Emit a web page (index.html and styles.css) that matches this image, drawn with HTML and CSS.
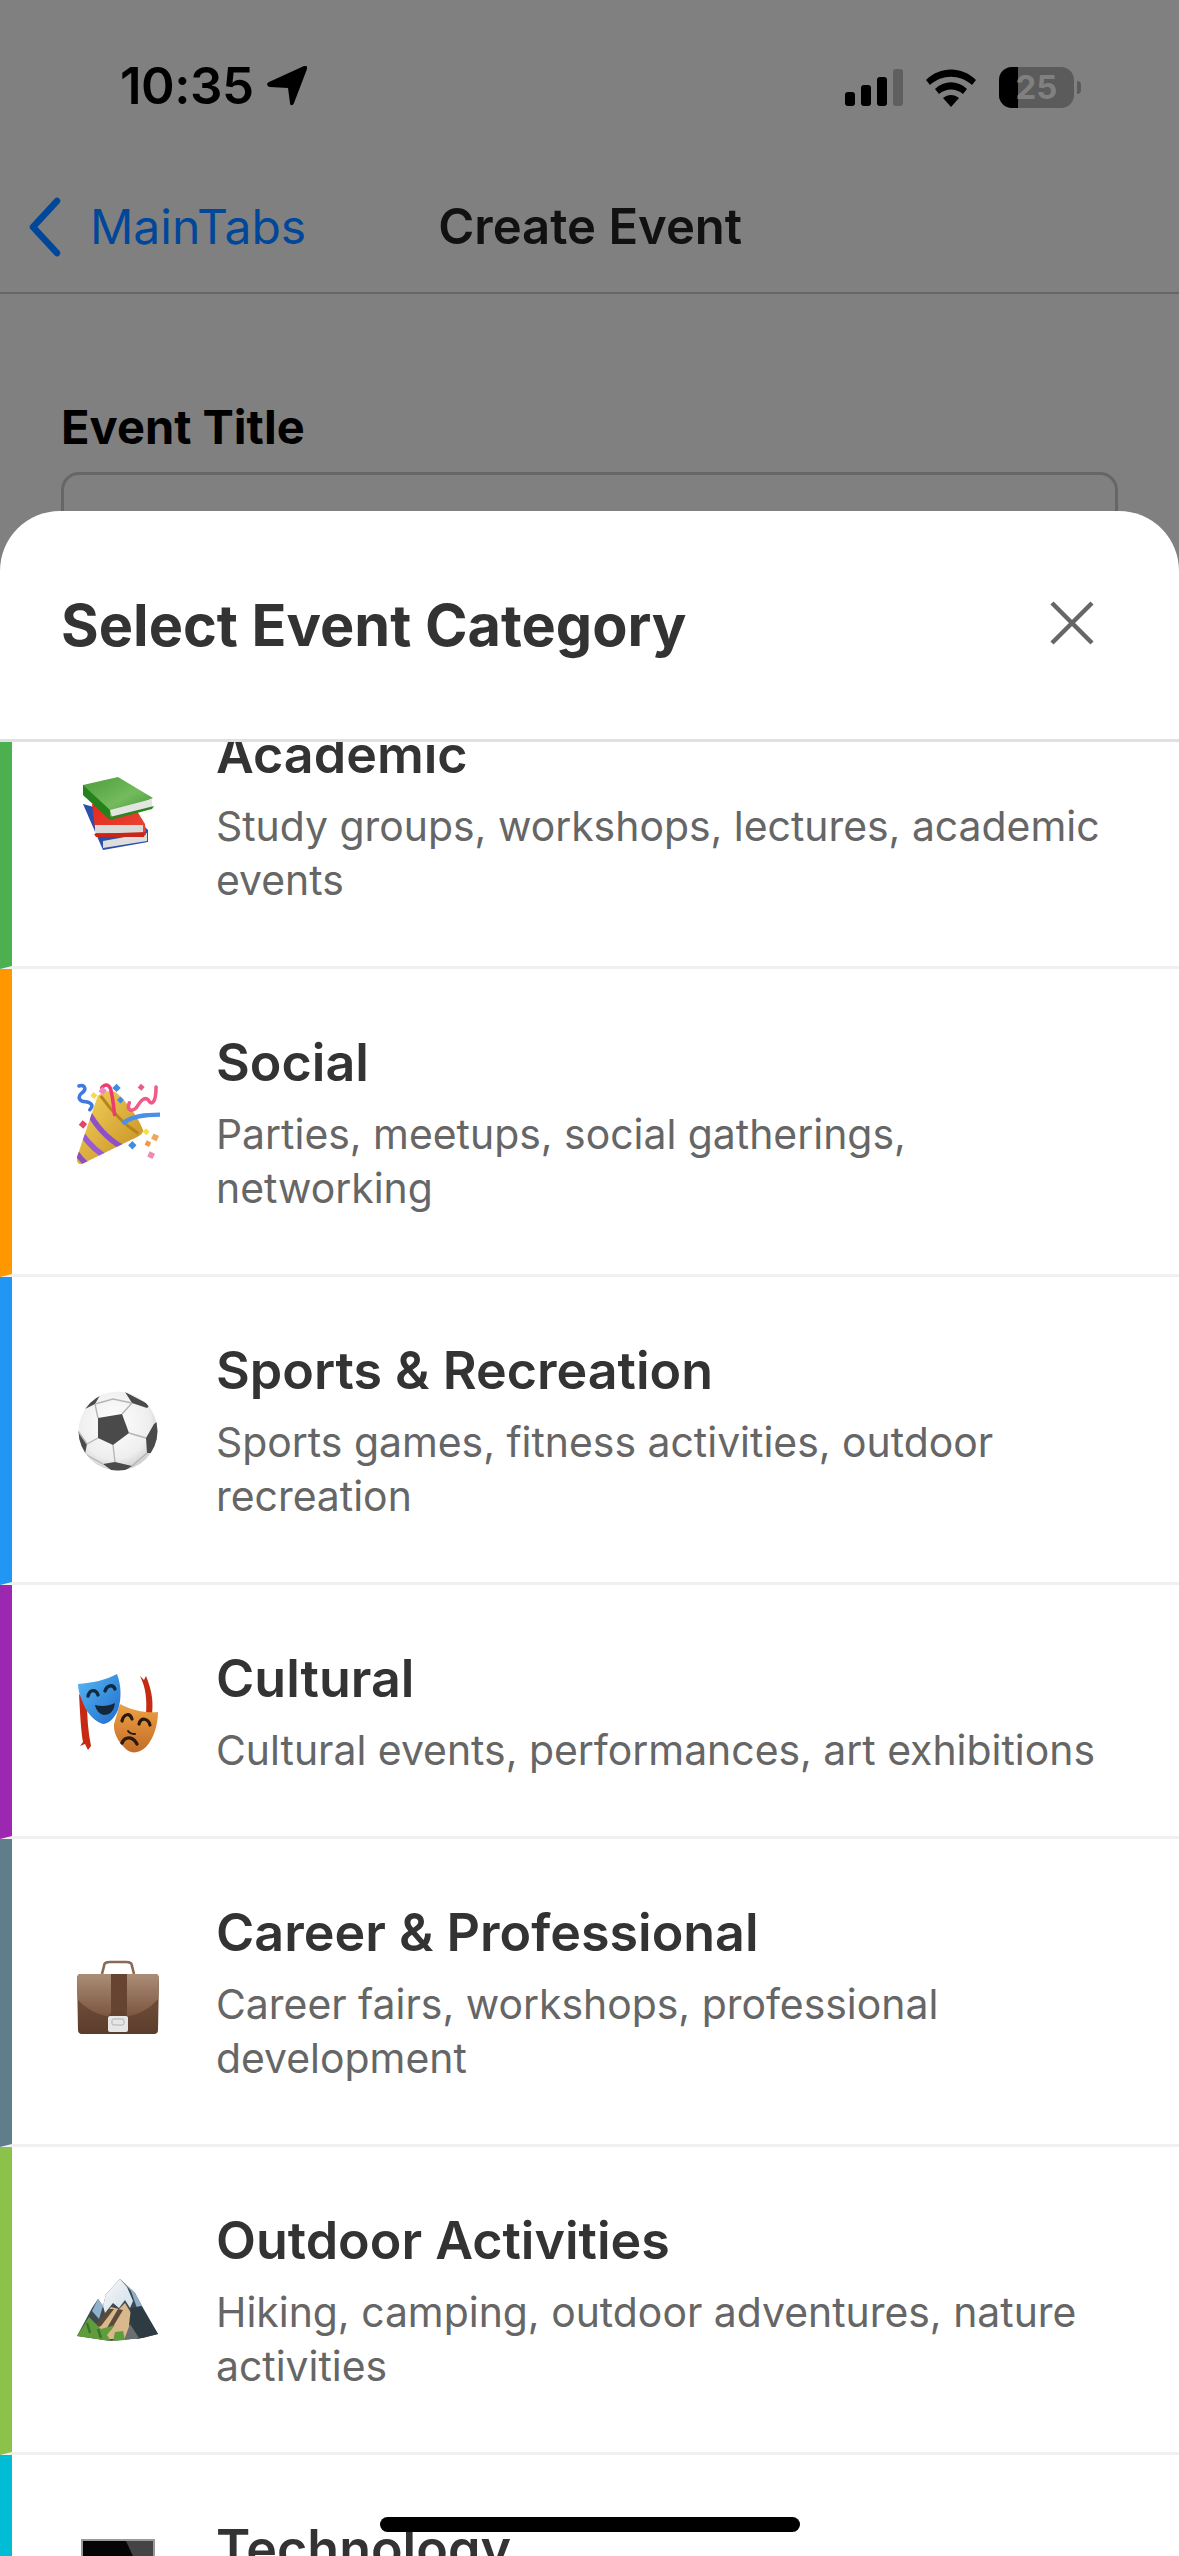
FILE: index.html
```html
<!DOCTYPE html>
<html lang="en">
<head>
<meta charset="utf-8">
<title>Create Event</title>
<link rel="stylesheet" href="styles.css">
</head>
<body>
<div class="screen">
  <div class="status">
    <div class="status-left">
      <span class="time">10:35</span>
      <svg class="loc" viewBox="0 0 40 40"><path d="M37 0 C39 -1 41 1 40 3 L27 37 C26 40 23 40 23 37 L21 22 L3 21 C0 21 -1 17 2 16 Z"/></svg>
    </div>
    <div class="status-right">
      <svg class="signal" viewBox="0 0 58 38"><rect x="0" y="23" width="10" height="14" rx="3"/><rect x="16" y="16" width="10" height="21" rx="3"/><rect x="32" y="8" width="10" height="29" rx="3"/><rect x="48" y="0" width="10" height="37" rx="3" fill="#5f5f5f"/></svg>
      <svg class="wifi" viewBox="0 0 52 38"><path d="M1 11 C15 -3 37 -3 51 11 L47 16 C35 5 17 5 5 16 Z"/><path d="M10 20 C19 11 33 11 42 20 L38 25 C31 19 21 19 14 25 Z"/><path d="M18 29 C23 25 29 25 34 29 L26 38 Z"/></svg>
      <div class="battery"><div class="battery-fill"></div><span class="battery-num">25</span></div>
      <div class="battery-cap"></div>
    </div>
  </div>
  <div class="nav">
    <div class="back">
      <svg class="chev" viewBox="0 0 36 60"><path d="M30 4 L6 30 L30 56"/></svg>
      <span class="back-label">MainTabs</span>
    </div>
    <span class="nav-title">Create Event</span>
  </div>
  <div class="form">
    <div class="field-label">Event Title</div>
    <div class="field-input"></div>
  </div>

  <div class="overlay">
    <div class="sheet">
      <div class="sheet-head">
        <h2 class="sheet-title">Select Event Category</h2>
        <svg class="close" viewBox="0 0 44 44"><path d="M2 2 L42 42 M42 2 L2 42"/></svg>
      </div>
      <div class="list">
        <div class="rows">
          <div class="row green">
            <div class="emoji books">
              <svg viewBox="0 0 72 73"><defs><linearGradient id="bg" x1="0" y1="0" x2="1" y2="1"><stop offset="0" stop-color="#4b9c39"/><stop offset="0.55" stop-color="#74bb5e"/><stop offset="1" stop-color="#3e9433"/></linearGradient><linearGradient id="rg" x1="0" y1="0" x2="1" y2="1"><stop offset="0" stop-color="#e3291c"/><stop offset="1" stop-color="#e8483a"/></linearGradient></defs>
                <path d="M1 27 L21 73 L66 65 L66 53 L55 42 Z" fill="#2a50ab"/>
                <path d="M21 64 L65 56 L65 64 L21 71 Z" fill="#dedede"/>
                <path d="M10 27 L55 34 L63 47 L64 58 L14 60 Z" fill="url(#rg)"/>
                <path d="M13 48 L61 48 L61 56 L13 56 Z" fill="#d9d9d7"/>
                <path d="M12 57 L64 55 L62 60 L14 60 Z" fill="#c9261a"/>
                <path d="M1 8 L36 0 L71 21 L28 40 L2 19 Z" fill="url(#bg)"/>
                <path d="M1 8 L1 18 L28 43 L28 33 Z" fill="#26811d"/>
                <path d="M28 33 L70 22 L70 30 L30 40 Z" fill="#e4e4e2"/>
                <path d="M28 40 L72 29 L70 32 L28 43 Z" fill="#2b861f"/>
              </svg>
            </div>
            <div class="text"><div class="name">Academic</div><div class="desc">Study groups, workshops, lectures, academic events</div></div>
          </div>
          <div class="row orange">
            <div class="emoji popper">
              <svg viewBox="0 0 84 84"><defs><linearGradient id="pg" x1="0" y1="0" x2="1" y2="1"><stop offset="0" stop-color="#f6d65e"/><stop offset="1" stop-color="#c28a1f"/></linearGradient><clipPath id="cone"><path d="M21 14 C28 8 36 8 40 11 C52 22 62 36 67 49 C66 54 60 56 56 58 L5 83 C1 84 -1 80 0 76 Z"/></clipPath></defs>
                <path d="M21 14 C28 8 36 8 40 11 C52 22 62 36 67 49 C66 54 60 56 56 58 L5 83 C1 84 -1 80 0 76 Z" fill="url(#pg)"/>
                <g clip-path="url(#cone)" fill="none" stroke-width="5.5">
                  <path d="M13 33 C22 48 36 62 52 69" stroke="#8e50c8"/>
                  <path d="M6 54 C13 64 22 72 34 79" stroke="#9a5bd2"/>
                  <path d="M0 72 C2 76 6 80 12 85" stroke="#8d4ec5"/>
                  <path d="M24 14 C34 28 46 42 62 52" stroke="#b9821d" stroke-width="3"/>
                </g>
                <path d="M46 42 C56 34 70 33 84 33" fill="none" stroke="#4a8fe8" stroke-width="4.5"/>
                <path d="M25 6 C28 2 32 2 34 7 C36 14 37 24 38 33" fill="none" stroke="#ee3b6f" stroke-width="3.6" stroke-linecap="round"/>
                <path d="M2 4 C8 2 10 8 5 11 C0 15 2 20 9 20 C15 21 17 24 13 28" fill="none" stroke="#3f78e0" stroke-width="3.6" stroke-linecap="round"/>
                <path d="M53 21 C50 28 55 31 60 26 C64 20 68 14 72 18 C75 24 80 22 80 5" fill="none" stroke="#ef5a86" stroke-width="3.6" stroke-linecap="round"/>
                <rect x="15" y="11" width="5" height="5" fill="#f4d94e" transform="rotate(40 17 13)"/>
                <rect x="23" y="6" width="6" height="6" fill="#e98bc0" transform="rotate(40 26 9)"/>
                <rect x="37" y="3" width="6" height="6" fill="#3f8be8" transform="rotate(45 40 6)"/>
                <rect x="41" y="16" width="5" height="5" fill="#3f8be8" transform="rotate(45 44 19)"/>
                <rect x="62" y="3" width="5" height="5" fill="#ee5a86" transform="rotate(40 65 6)"/>
                <rect x="3" y="40" width="6" height="6" fill="#e0466a" transform="rotate(40 6 43)"/>
                <rect x="67" y="48" width="5" height="5" fill="#f4e04e" transform="rotate(40 70 51)"/>
                <rect x="76" y="53" width="6" height="6" fill="#f2a45c" transform="rotate(25 79 56)"/>
                <rect x="69" y="60" width="5" height="5" fill="#f0994a" transform="rotate(25 72 63)"/>
                <rect x="53" y="61" width="6" height="6" fill="#3f8be8" transform="rotate(45 56 64)"/>
                <rect x="72" y="71" width="6" height="6" fill="#ee8cb4" transform="rotate(25 75 74)"/>
              </svg>
            </div>
            <div class="text"><div class="name">Social</div><div class="desc">Parties, meetups, social gatherings, networking</div></div>
          </div>
          <div class="row blue">
            <div class="emoji ball">
              <svg viewBox="0 0 80 80"><defs><radialGradient id="ballg" cx="0.45" cy="0.4" r="0.65"><stop offset="0" stop-color="#ffffff"/><stop offset="0.7" stop-color="#eeeeee"/><stop offset="1" stop-color="#c6c6c6"/></radialGradient><clipPath id="ballc"><circle cx="40" cy="40" r="39.5"/></clipPath></defs>
                <circle cx="40" cy="40" r="39.5" fill="url(#ballg)"/>
                <g clip-path="url(#ballc)">
                  <path d="M20 27 L44 23 L51 42 L35 54 L20 47 Z" fill="#4a4a4a"/>
                  <path d="M47 1 L72 14 L69 17 L54 12 Z M7 18 L17 3 L24 1 L17 13 Z M80 30 L76 33 L68 47 L69 62 L76 62 L84 50 Z M25 73 L37 71 L54 75 L40 84 Z M0 40 L9 53 L7 63 L-2 55 Z" fill="#4a4a4a"/>
                  <path d="M20 27 L17 13 M44 23 L54 12 M51 42 L68 47 M35 54 L37 71 M20 47 L9 53 M17 13 L35 8 L54 12 M69 62 L54 75 M9 53 L0 40 M25 73 L7 63" stroke="#b5b5b5" stroke-width="1.4" fill="none"/>
                </g>
              </svg>
            </div>
            <div class="text"><div class="name">Sports &amp; Recreation</div><div class="desc">Sports games, fitness activities, outdoor recreation</div></div>
          </div>
          <div class="row purple">
            <div class="emoji masks">
              <svg viewBox="0 0 80 81"><defs><linearGradient id="mb" x1="0" y1="0" x2="1" y2="1"><stop offset="0" stop-color="#58b8f4"/><stop offset="1" stop-color="#1f6ccb"/></linearGradient><linearGradient id="mo" x1="0" y1="0" x2="0" y2="1"><stop offset="0" stop-color="#eda244"/><stop offset="1" stop-color="#c46c28"/></linearGradient></defs>
                <path d="M1 22 C2 40 3 60 5 70 L2 74 L7 72 L10 78 L13 74 C10 60 9 44 9 30 Z" fill="#c62b12"/>
                <path d="M62 4 L66 8 L68 4 C72 14 76 26 74 42 L68 42 C69 28 68 16 62 4 Z" fill="#c32c12"/>
                <path d="M42 32 C55 39 68 41 80 40 C80 52 76 66 68 75 C62 81 54 82 49 78 C42 72 35 62 36 52 Z" fill="url(#mo)"/>
                <path d="M0 12 C14 11 28 8 39 2 C43 12 44 26 40 38 C36 47 30 52 25 52 C18 50 9 42 5 31 C2 24 0 18 0 12 Z" fill="url(#mb)"/>
                <path d="M10 24 C12 17 18 17 20 23 M27 19 C29 13 35 12 37 17" fill="none" stroke="#0e2b40" stroke-width="3.4" stroke-linecap="round"/>
                <path d="M17 33 C24 35 31 34 37 31 C36 40 31 43 26 43 C21 42 18 38 17 33 Z" fill="#14283a"/>
                <path d="M44 49 C46 41 52 41 54 47 M61 52 C63 45 70 46 72 53" fill="none" stroke="#2a1a0e" stroke-width="3.2" stroke-linecap="round"/>
                <path d="M50 59 C52 62 54 62 57 62" fill="none" stroke="#2a1a0e" stroke-width="2" stroke-linecap="round"/>
                <path d="M44 71 C47 64 55 64 59 72" fill="none" stroke="#2a1a0e" stroke-width="3.4" stroke-linecap="round"/>
              </svg>
            </div>
            <div class="text"><div class="name">Cultural</div><div class="desc">Cultural events, performances, art exhibitions</div></div>
          </div>
          <div class="row slate">
            <div class="emoji case">
              <svg viewBox="0 0 84 75"><defs><linearGradient id="lea" x1="0" y1="0" x2="0" y2="1"><stop offset="0" stop-color="#ab8d76"/><stop offset="1" stop-color="#7c5642"/></linearGradient><linearGradient id="lea2" x1="0" y1="0" x2="0" y2="1"><stop offset="0" stop-color="#7d5840"/><stop offset="1" stop-color="#5b3d2c"/></linearGradient></defs>
                <path d="M26 15 L28 7 C28 4 30 3 34 3 L50 3 C54 3 56 4 56 7 L58 15" fill="none" stroke="#8a6a54" stroke-width="2.6"/>
                <path d="M5 15 L79 15 C82 15 83 17 83 20 L82 71 C82 74 80 75 78 75 L6 75 C4 75 2 74 2 71 L1 20 C1 17 2 15 5 15 Z" fill="url(#lea2)"/>
                <path d="M5 15 L79 15 C82 15 83 17 83 20 L82 40 C74 50 60 57 51 57 L33 57 C24 57 10 50 2 41 L1 20 C1 17 2 15 5 15 Z" fill="url(#lea)"/>
                <rect x="35" y="15" width="16" height="42" fill="#674432"/>
                <path d="M32 60 C33 54 37 52 42 52 C47 52 51 54 52 60 Z" fill="#62412f"/>
                <rect x="32" y="57" width="20" height="16" rx="2" fill="#e6e6e6"/>
                <rect x="36" y="60" width="12" height="6" rx="1.5" fill="none" stroke="#b0b0b0"/>
              </svg>
            </div>
            <div class="text"><div class="name">Career &amp; Professional</div><div class="desc">Career fairs, workshops, professional development</div></div>
          </div>
          <div class="row lime">
            <div class="emoji mountain">
              <svg viewBox="0 0 82 62"><defs><linearGradient id="sn" x1="0" y1="0" x2="1" y2="1"><stop offset="0" stop-color="#f7f9fa"/><stop offset="1" stop-color="#cfdde8"/></linearGradient></defs>
                <path d="M0 57 L15 29 L21 20 L26 27 L29 15 L43 0 L58 14 L65 27 L81 55 L66 59 L33 62 Z" fill="#3d4a50"/>
                <path d="M21 20 L26 27 L22 40 L15 32 Z" fill="#8fb2cc"/>
                <path d="M34 28 L42 30 L48 24 L54 34 L56 45 L50 60 L22 60 L14 52 Z" fill="#d9b98c"/>
                <path d="M30 30 L16 50 L24 47 L37 30 Z M41 30 L27 54 L34 51 L46 31 Z" fill="#5a4a3c"/>
                <path d="M43 0 L50 8 L56 22 L53 29 L48 21 L42 29 L36 24 L28 34 L26 27 L29 15 Z" fill="url(#sn)"/>
                <path d="M46 3 L58 14 L65 27 L60 29 L54 12 Z" fill="#8db0cc"/>
                <path d="M54 29 L64 27 L81 55 L60 60 L52 46 Z" fill="#2f3b42"/>
                <path d="M53 45 L62 59 L47 61 Z" fill="#6b6f70"/>
                <path d="M0 57 L12 38 L18 44 L24 50 L38 46 L30 56 L34 62 L20 60 Z" fill="#5e9c3c"/>
                <path d="M10 44 L13 54 M21 50 L24 59" stroke="#38752a" stroke-width="2.5"/>
                <path d="M38 53 L46 52 L48 61 L36 62 Z" fill="#5e9c3c"/>
              </svg>
            </div>
            <div class="text"><div class="name">Outdoor Activities</div><div class="desc">Hiking, camping, outdoor adventures, nature activities</div></div>
          </div>
          <div class="row cyan">
            <div class="emoji laptop">
              <svg viewBox="0 0 74 60"><rect x="0" y="0" width="74" height="50" fill="#9a9a9a"/><rect x="2" y="2" width="70" height="48" fill="#050505"/><path d="M45 2 L72 2 L72 50 L67 50 Z" fill="#444"/></svg>
            </div>
            <div class="text"><div class="name">Technology</div><div class="desc">Tech talks, hackathons, coding workshops</div></div>
          </div>
        </div>
      </div>
      <div class="home-bar"></div>
    </div>
  </div>
</div>
</body>
</html>
```
FILE: styles.css
```css
* { box-sizing: border-box; }
html, body { margin: 0; padding: 0; }
body { font-family: "Inter", "Noto Sans", "Liberation Sans", sans-serif; background: #808080; }
.screen { position: relative; width: 1179px; height: 2556px; overflow: hidden; background: #808080; }

.status { height: 174px; padding: 58px 98px 0 120px; display: flex; justify-content: space-between; align-items: flex-start; }
.status-left { display: flex; align-items: center; gap: 13px; }
.time { font-size: 51px; line-height: 56px; font-weight: 600; color: #000; letter-spacing: -0.5px; }
.loc { width: 40px; height: 40px; fill: #000; }
.status-right { display: flex; align-items: center; padding-top: 9px; }
.signal { width: 58px; height: 38px; fill: #000; }
.wifi { width: 52px; height: 38px; fill: #000; margin-left: 22px; }
.battery { position: relative; width: 75px; height: 41px; margin-left: 22px; border-radius: 13px; background: #5b5b5b; overflow: hidden; display: flex; align-items: center; justify-content: center; }
.battery-fill { position: absolute; left: 0; top: 0; bottom: 0; width: 19px; background: #000; }
.battery-num { position: relative; font-size: 33px; font-weight: 700; color: #808080; line-height: 41px; }
.battery-cap { width: 4px; height: 13px; margin-left: 3px; background: #5b5b5b; border-radius: 0 4px 4px 0; }

.nav { height: 120px; border-bottom: 2px solid #666; display: flex; align-items: center; padding-left: 27px; padding-bottom: 12px; }
.back { display: flex; align-items: center; gap: 27px; }
.chev { width: 36px; height: 60px; fill: none; stroke: #00479a; stroke-width: 6.5; stroke-linecap: round; stroke-linejoin: round; }
.back-label { font-size: 48px; line-height: 60px; color: #00479a; }
.nav-title { margin-left: 132px; font-size: 49px; line-height: 60px; font-weight: 600; color: #111; }

.form { padding: 106px 61px 0; }
.field-label { font-size: 47px; line-height: 54px; font-weight: 700; color: #000; }
.field-input { margin-top: 18px; height: 150px; border: 3px solid #666; border-radius: 18px; }

.overlay { position: absolute; left: 0; right: 0; top: 0; bottom: 0; display: flex; flex-direction: column; justify-content: flex-end; }
.sheet { position: relative; height: 2045px; background: #fff; border-radius: 60px 60px 0 0; display: flex; flex-direction: column; overflow: hidden; }
.sheet-head { height: 231px; flex: none; padding: 0 85px 0 61px; border-bottom: 3px solid #e0e0e0; display: flex; align-items: center; justify-content: space-between; }
.sheet-title { margin: 0; font-size: 57.6px; line-height: 70px; font-weight: 700; color: #333; }
.close { width: 44px; height: 44px; margin-bottom: 4px; fill: none; stroke: #666; stroke-width: 4.5; }

.list { flex: 1; overflow: hidden; }
.rows { margin-top: -81px; }
.row { display: flex; align-items: center; padding: 62px 62px 59px 61px; border-left: 12px solid; border-bottom: 3px solid #f0f0f0; }
.green { border-left-color: #4caf50; }
.orange { border-left-color: #ff9800; }
.blue { border-left-color: #2196f3; }
.purple { border-left-color: #9c27b0; }
.slate { border-left-color: #607d8b; }
.lime { border-left-color: #8bc34a; }
.cyan { border-left-color: #00bcd4; }
.emoji { width: 90px; flex: none; margin-right: 53px; display: flex; align-items: center; justify-content: center; }
.emoji svg { display: block; }
.books svg { width: 72px; margin-bottom: 4px; }
.popper svg { width: 83px; }
.ball svg { width: 80px; }
.masks svg { width: 80px; }
.case svg { width: 84px; margin-top: 6px; }
.mountain svg { width: 82px; margin-top: 18px; }
.laptop svg { width: 74px; margin-bottom: 26px; }
.text { flex: 1; min-width: 0; }
.name { font-size: 52px; line-height: 63px; font-weight: 600; color: #333; margin-bottom: 13px; }
.desc { font-size: 40.9px; line-height: 54px; color: #666; }

.home-bar { position: absolute; left: 380px; bottom: 24px; width: 420px; height: 15px; border-radius: 8px; background: #000; }
```
